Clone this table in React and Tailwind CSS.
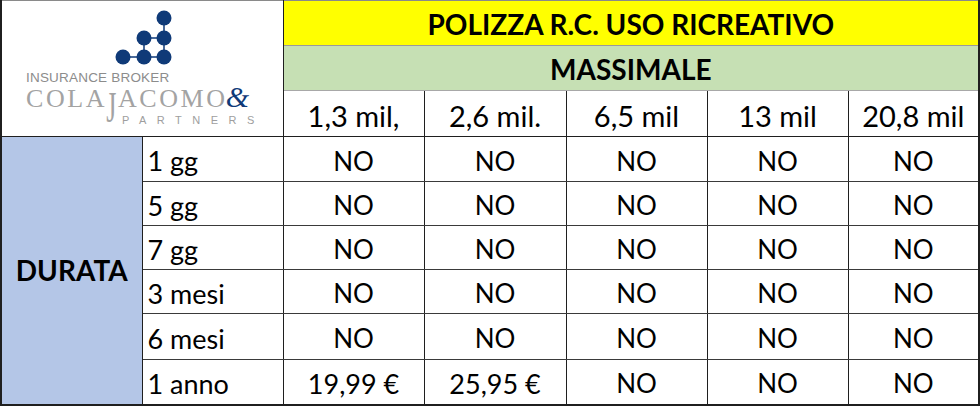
import React from "react";

const font = { fontFamily: "Lato, 'Open Sans', sans-serif" };

const rows = [
  ["1 gg", "NO", "NO", "NO", "NO", "NO"],
  ["5 gg", "NO", "NO", "NO", "NO", "NO"],
  ["7 gg", "NO", "NO", "NO", "NO", "NO"],
  ["3 mesi", "NO", "NO", "NO", "NO", "NO"],
  ["6 mesi", "NO", "NO", "NO", "NO", "NO"],
  ["1 anno", "19,99 €", "25,95 €", "NO", "NO", "NO"],
];

const heads = ["1,3 mil,", "2,6 mil.", "6,5 mil", "13 mil", "20,8 mil"];

function Logo() {
  return (
    <div className="flex flex-col items-start pl-[24px] pt-[8px]">
      <svg width="150" height="58" viewBox="0 0 150 58">
        <g stroke="#0f3a78" strokeWidth="1.5" fill="none">
          <line x1="138" y1="9" x2="138" y2="48" />
          <line x1="118" y1="29" x2="138" y2="29" />
          <line x1="118" y1="29" x2="118" y2="48" />
          <line x1="97" y1="48" x2="138" y2="48" />
        </g>
        <g fill="#0f3a78">
          <circle cx="138" cy="9" r="7.5" />
          <circle cx="118" cy="29" r="7.5" />
          <circle cx="138" cy="29" r="7.5" />
          <circle cx="97" cy="48" r="7.5" />
          <circle cx="118" cy="48" r="7.5" />
          <circle cx="138" cy="48" r="7.5" />
        </g>
      </svg>
      <div
        className="text-[13.5px] leading-none text-[#8c8c8c] tracking-[0.2px] mt-[4px]"
        style={{ fontFamily: "'Liberation Sans', Arial, sans-serif" }}
      >
        INSURANCE BROKER
      </div>
      <div className="flex items-start mt-[1px]">
        <div
          className="text-[26px] leading-none text-[#a3a3a3] flex items-start tracking-[2.6px]"
          style={{ fontFamily: "'Liberation Serif', 'Times New Roman', serif" }}
        >
          <span>COLA</span>
          <span className="inline-block origin-top scale-y-[1.7] -mx-[1px]">J</span>
          <span>ACOMO</span>
        </div>
        <span
          className="text-[30px] leading-none text-[#0f3a78] italic -mt-[4px] -ml-[2px]"
          style={{ fontFamily: "'Liberation Serif', 'Times New Roman', serif" }}
        >
          &amp;
        </span>
      </div>
      <div
        className="ml-[96px] mt-[3px] text-[11px] leading-none text-[#9e9e9e] tracking-[10.5px]"
        style={{ fontFamily: "'Liberation Sans', Arial, sans-serif" }}
      >
        PARTNERS
      </div>
    </div>
  );
}

const rowH = ["h-[45px]", "h-[44px]", "h-[44px]", "h-[44px]", "h-[46px]", "h-[45px]"];

export default function App() {
  return (
    <div className="w-[980px] h-[408px] bg-white text-black" style={font}>
      <table className="border-collapse table-fixed w-[979px] border-l-2 border-r-2 border-b-2 border-l-[#1f1f1f] border-r-[#1f1f1f] border-b-[#1f1f1f] border-t border-t-[#8a8a8a]">
        <colgroup>
          <col className="w-[141px]" />
          <col className="w-[141px]" />
          <col className="w-[141px]" />
          <col className="w-[142px]" />
          <col className="w-[141px]" />
          <col className="w-[141px]" />
          <col className="w-[131px]" />
        </colgroup>
        <tbody>
          <tr className="h-[45px]">
            <td colSpan={2} rowSpan={3} className="p-0 align-top bg-white border-r border-r-[#1f1f1f] border-b border-b-[#1f1f1f]">
              <Logo />
            </td>
            <td colSpan={5} className="p-0 pt-[2px] bg-[#ffff00] text-center font-bold text-[28px] leading-none border-b border-b-[#9a9a9a]">
              POLIZZA R.C. USO RICREATIVO
            </td>
          </tr>
          <tr className="h-[45px]">
            <td colSpan={5} className="p-0 pt-[2px] bg-[#c6e0b4] text-center font-bold text-[28px] leading-none border-b border-b-[#a8a8a8]">
              MASSIMALE
            </td>
          </tr>
          <tr className="h-[46px]">
            {heads.map((h, i) => (
              <td
                key={i}
                className={`p-0 pt-[4px] text-center text-[29px] leading-none border-b border-b-[#1f1f1f] ${i > 0 ? "border-l border-l-[#1f1f1f]" : ""}`}
              >
                {h}
              </td>
            ))}
          </tr>
          {rows.map((r, ri) => (
            <tr key={ri} className={rowH[ri]}>
              {ri === 0 && (
                <td rowSpan={6} className="p-0 bg-[#b4c6e7] text-center align-middle font-bold text-[28px] border-r border-r-[#1f1f1f]">
                  DURATA
                </td>
              )}
              {r.map((c, ci) => (
                <td
                  key={ci}
                  className={`p-0 pt-[3px] leading-none border-r border-r-[#1f1f1f] ${ri < 5 ? "border-b border-b-[#3a3a3a]" : ""} ${ci === 0 ? "text-left pl-[5px] text-[27px]" : c === "NO" ? "text-center text-[26px]" : "text-center text-[27px]"}`}
                >
                  {c}
                </td>
              ))}
            </tr>
          ))}
        </tbody>
      </table>
    </div>
  );
}
